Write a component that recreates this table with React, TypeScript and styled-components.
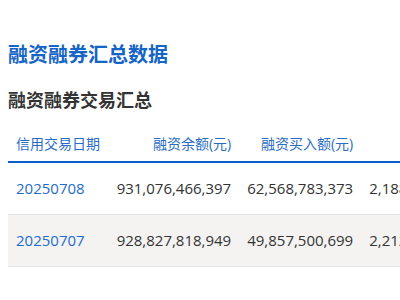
import styled, { createGlobalStyle } from 'styled-components';

const GlobalStyle = createGlobalStyle`
  body {
    margin: 0;
    background: #fff;
    overflow: hidden;
    font-family: 'Open Sans', 'Noto Sans CJK SC', sans-serif;
  }
`;

type Row = { date: string; balance: string; buy: string; extra: string };

const rows: Row[] = [
  { date: '20250708', balance: '931,076,466,397', buy: '62,568,783,373', extra: '2,188,652,337,781' },
  { date: '20250707', balance: '928,827,818,949', buy: '49,857,500,699', extra: '2,212,406,118,520' },
];

const App = () => {
  return (
    <Page>
      <GlobalStyle />
      <Title>融资融券汇总数据</Title>
      <SubTitle>融资融券交易汇总</SubTitle>
      <Table>
        <thead>
          <tr>
            <Th>信用交易日期</Th>
            <Th $right>融资余额(元)</Th>
            <Th $right>融资买入额(元)</Th>
            <Th $right>融券余量</Th>
          </tr>
        </thead>
        <tbody>
          {rows.map((r, i) => (
            <Tr key={r.date} $striped={i % 2 === 1}>
              <DateCell>{r.date}</DateCell>
              <Td>{r.balance}</Td>
              <Td>{r.buy}</Td>
              <Td>{r.extra}</Td>
            </Tr>
          ))}
        </tbody>
      </Table>
    </Page>
  );
};

const Page = styled.div`
  padding: 41px 8px 0;
  width: 600px;
`;

const Title = styled.h2`
  margin: 0;
  font-size: 20px;
  line-height: 28px;
  font-weight: 700;
  color: #1565c6;
`;

const SubTitle = styled.h3`
  margin: 19px 0 0;
  font-size: 18px;
  line-height: 24px;
  font-weight: 700;
  color: #333;
`;

const Table = styled.table`
  margin-top: 14px;
  border-collapse: collapse;
  white-space: nowrap;
`;

const Th = styled.th<{ $right?: boolean }>`
  padding: 8px 8px 7px;
  font-size: 14px;
  line-height: 20px;
  font-weight: 400;
  color: #2a6cc4;
  text-align: ${(p) => (p.$right ? 'right' : 'left')};
  border-bottom: 2px solid #0a5fc6;
`;

const Tr = styled.tr<{ $striped: boolean }>`
  background: ${(p) => (p.$striped ? '#f4f3f2' : '#fff')};
  border-bottom: 1px solid #e2e2e2;
`;

const Td = styled.td`
  padding: 15px 8px;
  font-size: 15px;
  line-height: 21px;
  color: #333;
  text-align: right;
`;

const DateCell = styled(Td)`
  text-align: left;
  color: #1f6bcc;
  padding-right: 24px;
`;

export default App;
